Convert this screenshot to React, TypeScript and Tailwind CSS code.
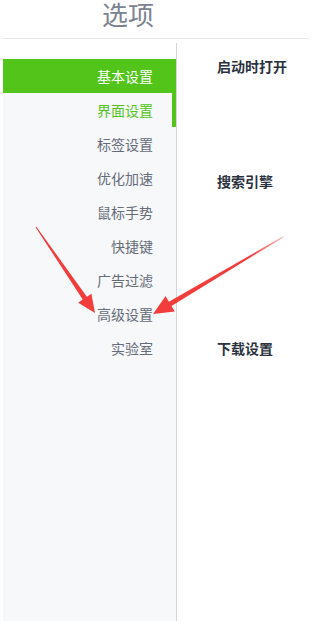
const items = ['基本设置', '界面设置', '标签设置', '优化加速', '鼠标手势', '快捷键', '广告过滤', '高级设置', '实验室'];

function Arrows() {
  return (
    <svg className="pointer-events-none absolute inset-0" width="311" height="621" viewBox="0 0 311 621">
      <defs>
        <linearGradient id="fadeR" x1="283" y1="237" x2="153" y2="314" gradientUnits="userSpaceOnUse">
          <stop offset="0" stopColor="#f23d3d" stopOpacity="0.4" />
          <stop offset="0.25" stopColor="#f23d3d" />
          <stop offset="1" stopColor="#f23d3d" />
        </linearGradient>
      </defs>
      <polygon
        fill="#f23d3d"
        points="35.6,227.3 82.7,299.6 78.2,302.7 95,313 91.4,293.7 86.9,296.8 36.4,226.7"
      />
      <polygon
        fill="url(#fadeR)"
        points="282.8,236.6 168.9,301.7 165.6,296.1 153,314 174.8,311.5 171.5,306 283.2,237.4"
      />
    </svg>
  );
}

export default function App() {
  return (
    <div
      className="relative h-[621px] w-[311px] overflow-hidden bg-white"
      style={{ fontFamily: '"Microsoft YaHei", "Noto Sans CJK SC", sans-serif' }}
    >
      <div className="mx-[2px] flex h-[39px] items-start border-b border-[#e8e9eb] pl-[100px] pt-[1px]">
        <h1 className="text-[26px] leading-[26px] text-[#7b838f]">选项</h1>
      </div>
      <div className="flex h-[582px]">
        <aside className="ml-[3px] mt-[4px] flex w-[174px] flex-col border-r border-[#d3d5d9]">
          <div className="h-[16px] bg-white" />
          <ul className="flex-1 bg-[#f7f8fa]">
            {items.map((t, i) => (
              <li
                key={t}
                className={
                  i === 0
                    ? 'flex h-[34px] items-center justify-end bg-[#52c41a] pr-[23px] text-[14px] leading-[20px] text-white'
                    : i === 1
                      ? 'flex h-[34px] items-center justify-end border-r-4 border-[#52c41a] pr-[19px] text-[14px] leading-[20px] text-[#52c41a]'
                      : 'flex h-[34px] items-center justify-end pr-[23px] text-[14px] leading-[20px] text-[#666c78]'
                }
              >
                {t}
              </li>
            ))}
          </ul>
        </aside>
        <main className="flex flex-col pl-[40px] text-[14px] font-bold leading-[20px] text-[#2a323d]">
          <h2 className="mt-[17px]">启动时打开</h2>
          <h2 className="mt-[95px]">搜索引擎</h2>
          <h2 className="mt-[147px]">下载设置</h2>
        </main>
      </div>
      <Arrows />
    </div>
  );
}
